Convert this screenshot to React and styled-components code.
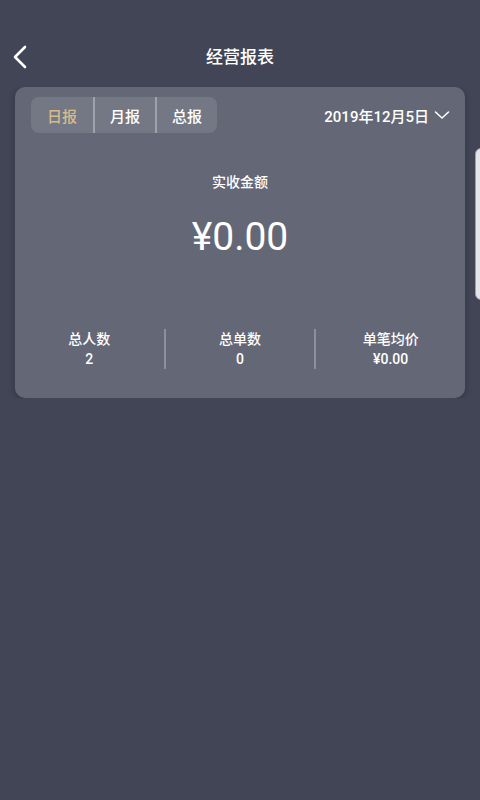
import styled, { createGlobalStyle } from "styled-components";

const GlobalStyle = createGlobalStyle`
    html, body {
        margin: 0;
        padding: 0;
        background: #414555;
    }
    * {
        box-sizing: border-box;
    }
`;

const stats = [
    { label: "总人数", value: "2" },
    { label: "总单数", value: "0" },
    { label: "单笔均价", value: "¥0.00" },
];

const tabs = ["日报", "月报", "总报"];

export default function App() {
    return (
        <Page>
            <GlobalStyle />
            <Header>
                <Back>
                    <svg width="16" height="24" viewBox="0 0 16 24" fill="none">
                        <path d="M13 2 L3 12 L13 22" stroke="#ffffff" strokeWidth="2.6" strokeLinecap="round" strokeLinejoin="round" />
                    </svg>
                </Back>
                <Title>经营报表</Title>
                <span />
            </Header>
            <Carousel>
                <Card>
                    <TopRow>
                        <Tabs>
                            {tabs.map((t, i) => (
                                <Tab key={t} active={i === 0}>{t}</Tab>
                            ))}
                        </Tabs>
                        <DatePick>
                            2019年12月5日
                            <svg width="16" height="10" viewBox="0 0 16 10" fill="none">
                                <path d="M1.5 2 L8 8 L14.5 2" stroke="#ffffff" strokeWidth="1.6" strokeLinecap="round" strokeLinejoin="round" />
                            </svg>
                        </DatePick>
                    </TopRow>
                    <Label>实收金额</Label>
                    <Amount>¥0.00</Amount>
                    <Stats>
                        {stats.map((s) => (
                            <Stat key={s.label}>
                                <p>{s.label}</p>
                                <h5>{s.value}</h5>
                            </Stat>
                        ))}
                    </Stats>
                </Card>
                <Peek />
            </Carousel>
        </Page>
    );
}

const Page = styled.div`
    width: 480px;
    height: 800px;
    background: #414555;
    font-family: Roboto, "Noto Sans CJK SC", sans-serif;
    color: #ffffff;
    overflow: hidden;
`;

const Header = styled.div`
    display: grid;
    grid-template-columns: 60px 1fr 60px;
    align-items: center;
    padding-top: 40px;
    height: 74px;
`;

const Back = styled.div`
    display: flex;
    align-items: center;
    padding-left: 12px;
`;

const Title = styled.h1`
    margin: 0;
    text-align: center;
    font-size: 17px;
    font-weight: 500;
    line-height: 34px;
`;

const Carousel = styled.div`
    display: flex;
    align-items: flex-start;
    gap: 10px;
    padding-left: 15px;
    margin-top: 13px;
    overflow: hidden;
`;

const Card = styled.div`
    flex-shrink: 0;
    width: 450px;
    height: 311px;
    background: #646876;
    border-radius: 10px;
    box-shadow: 0 2px 6px rgba(20, 22, 32, 0.35);
    display: flex;
    flex-direction: column;
    padding-top: 10px;
`;

const Peek = styled.div`
    flex-shrink: 0;
    width: 300px;
    height: 152px;
    margin-top: 61px;
    background: #e4e5ea;
    border: 1px solid #9ea1ac;
    border-radius: 6px;
`;

const TopRow = styled.div`
    display: flex;
    justify-content: space-between;
    align-items: center;
    padding: 0 15px 0 16px;
    height: 36px;
`;

const Tabs = styled.div`
    display: flex;
    background: #747885;
    border-radius: 8px;
    height: 36px;
    overflow: hidden;
`;

const Tab = styled.div`
    width: 62px;
    display: flex;
    align-items: center;
    justify-content: center;
    font-size: 15px;
    font-weight: 500;
    color: ${(props) => (props.active ? "#d6bb8c" : "#ffffff")};
    & + & {
        border-left: 2px solid #9fa2ad;
    }
`;

const DatePick = styled.div`
    display: flex;
    align-items: center;
    gap: 5px;
    font-size: 15px;
    font-weight: 500;
`;

const Label = styled.p`
    margin: 39px 0 0;
    text-align: center;
    font-size: 14px;
    line-height: 20px;
    font-weight: 500;
`;

const Amount = styled.h2`
    margin: 22px 0 0;
    text-align: center;
    font-size: 39px;
    line-height: 46px;
    font-weight: 400;
`;

const Stats = styled.div`
    display: flex;
    margin-top: 69px;
`;

const Stat = styled.div`
    flex: 1;
    height: 40px;
    display: flex;
    flex-direction: column;
    align-items: center;
    & + & {
        border-left: 2px solid #8d909c;
    }
    p, h5 {
        margin: 0;
        font-size: 14px;
        line-height: 20px;
        font-weight: 500;
    }
`;
